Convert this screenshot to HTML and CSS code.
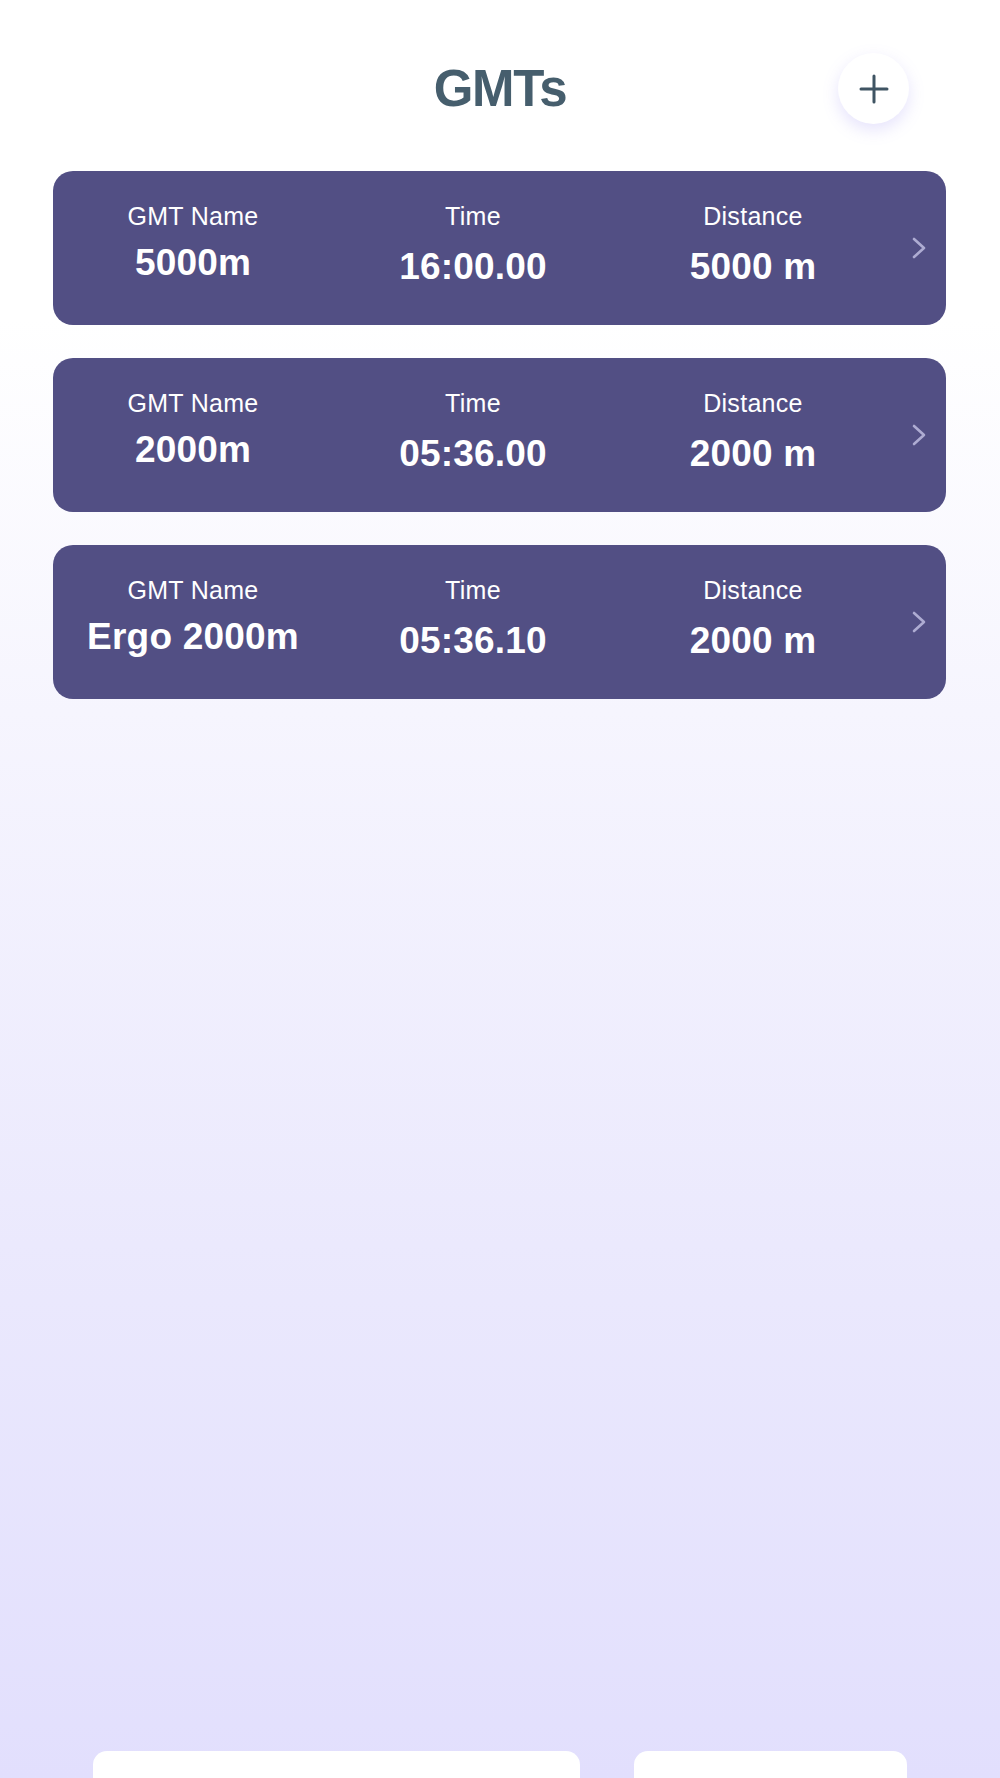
FILE: index.html
```html
<!DOCTYPE html>
<html lang="en">
<head>
<meta charset="utf-8">
<title>GMTs</title>
<link rel="stylesheet" href="styles.css">
</head>
<body>
<div class="page">
  <header class="header">
    <div></div>
    <h1 class="title">GMTs</h1>
    <button class="add-btn" aria-label="Add">
      <svg width="30" height="30" viewBox="0 0 30 30"><path d="M15 2v26M2 15h26" stroke="#3f5463" stroke-width="3" stroke-linecap="round" fill="none"/></svg>
    </button>
  </header>

  <main class="list">
    <div class="card">
      <div class="cell cell-name"><span class="label">GMT Name</span><span class="value">5000m</span></div>
      <div class="cell"><span class="label">Time</span><span class="value">16:00.00</span></div>
      <div class="cell"><span class="label">Distance</span><span class="value">5000 m</span></div>
      <div class="chev"><svg width="14" height="22" viewBox="0 0 14 22"><polyline points="2,2 12,11 2,20" fill="none" stroke="#aeacd2" stroke-width="2.6" stroke-linecap="round" stroke-linejoin="round"/></svg></div>
    </div>
    <div class="card">
      <div class="cell cell-name"><span class="label">GMT Name</span><span class="value">2000m</span></div>
      <div class="cell"><span class="label">Time</span><span class="value">05:36.00</span></div>
      <div class="cell"><span class="label">Distance</span><span class="value">2000 m</span></div>
      <div class="chev"><svg width="14" height="22" viewBox="0 0 14 22"><polyline points="2,2 12,11 2,20" fill="none" stroke="#aeacd2" stroke-width="2.6" stroke-linecap="round" stroke-linejoin="round"/></svg></div>
    </div>
    <div class="card">
      <div class="cell cell-name"><span class="label">GMT Name</span><span class="value">Ergo 2000m</span></div>
      <div class="cell"><span class="label">Time</span><span class="value">05:36.10</span></div>
      <div class="cell"><span class="label">Distance</span><span class="value">2000 m</span></div>
      <div class="chev"><svg width="14" height="22" viewBox="0 0 14 22"><polyline points="2,2 12,11 2,20" fill="none" stroke="#aeacd2" stroke-width="2.6" stroke-linecap="round" stroke-linejoin="round"/></svg></div>
    </div>
  </main>

  <footer class="footer">
    <div class="tab tab-wide"></div>
    <div class="tab tab-narrow"></div>
  </footer>
</div>
</body>
</html>
```

FILE: styles.css
```css
* { box-sizing: border-box; }

html, body {
  margin: 0;
  padding: 0;
}

body {
  font-family: "Liberation Sans", Arial, sans-serif;
  background: #e2dffd;
}

.page {
  height: 1778px;
  overflow: hidden;
  display: flex;
  flex-direction: column;
  background: linear-gradient(180deg, #ffffff 0%, #ffffff 18%, #f6f5fe 40%, #ebe9fd 70%, #e2dffd 100%);
}

.header {
  display: grid;
  grid-template-columns: 1fr auto 1fr;
  align-items: center;
  padding-top: 53px;
  height: 113px;
}

.title {
  margin: 0;
  font-size: 51px;
  line-height: 60px;
  font-weight: 700;
  letter-spacing: -1.3px;
  color: #465e6d;
}

.add-btn {
  justify-self: end;
  margin-right: 91px;
  width: 71px;
  height: 71px;
  border: none;
  border-radius: 50%;
  background: #ffffff;
  box-shadow: 0 6px 16px rgba(140, 128, 240, 0.22);
  display: flex;
  align-items: center;
  justify-content: center;
  padding: 0;
}

.list {
  margin: 58px 54px 0 53px;
  display: flex;
  flex-direction: column;
  gap: 33px;
}

.card {
  height: 154px;
  border-radius: 20px;
  background: #524f84;
  display: grid;
  grid-template-columns: 280px 280px 280px 1fr;
  color: #ffffff;
}

.cell {
  display: flex;
  flex-direction: column;
  align-items: center;
  padding-top: 30px;
}

.label {
  font-size: 25px;
  line-height: 30px;
  letter-spacing: 0.3px;
  font-weight: 400;
}

.value {
  margin-top: 14px;
  font-size: 37px;
  line-height: 44px;
  font-weight: 700;
  letter-spacing: 0.2px;
}

.cell-name .value {
  margin-top: 10px;
}

.chev {
  display: flex;
  align-items: center;
  justify-content: center;
  padding-right: 1px;
}

.chev svg { display: block; }

.footer {
  margin-top: auto;
  height: 27px;
  display: flex;
  align-items: flex-start;
  gap: 54px;
  padding-left: 93px;
}

.tab {
  height: 60px;
  background: #ffffff;
  border-radius: 14px;
  flex: none;
}

.tab-wide { width: 487px; }
.tab-narrow { width: 273px; }
```
